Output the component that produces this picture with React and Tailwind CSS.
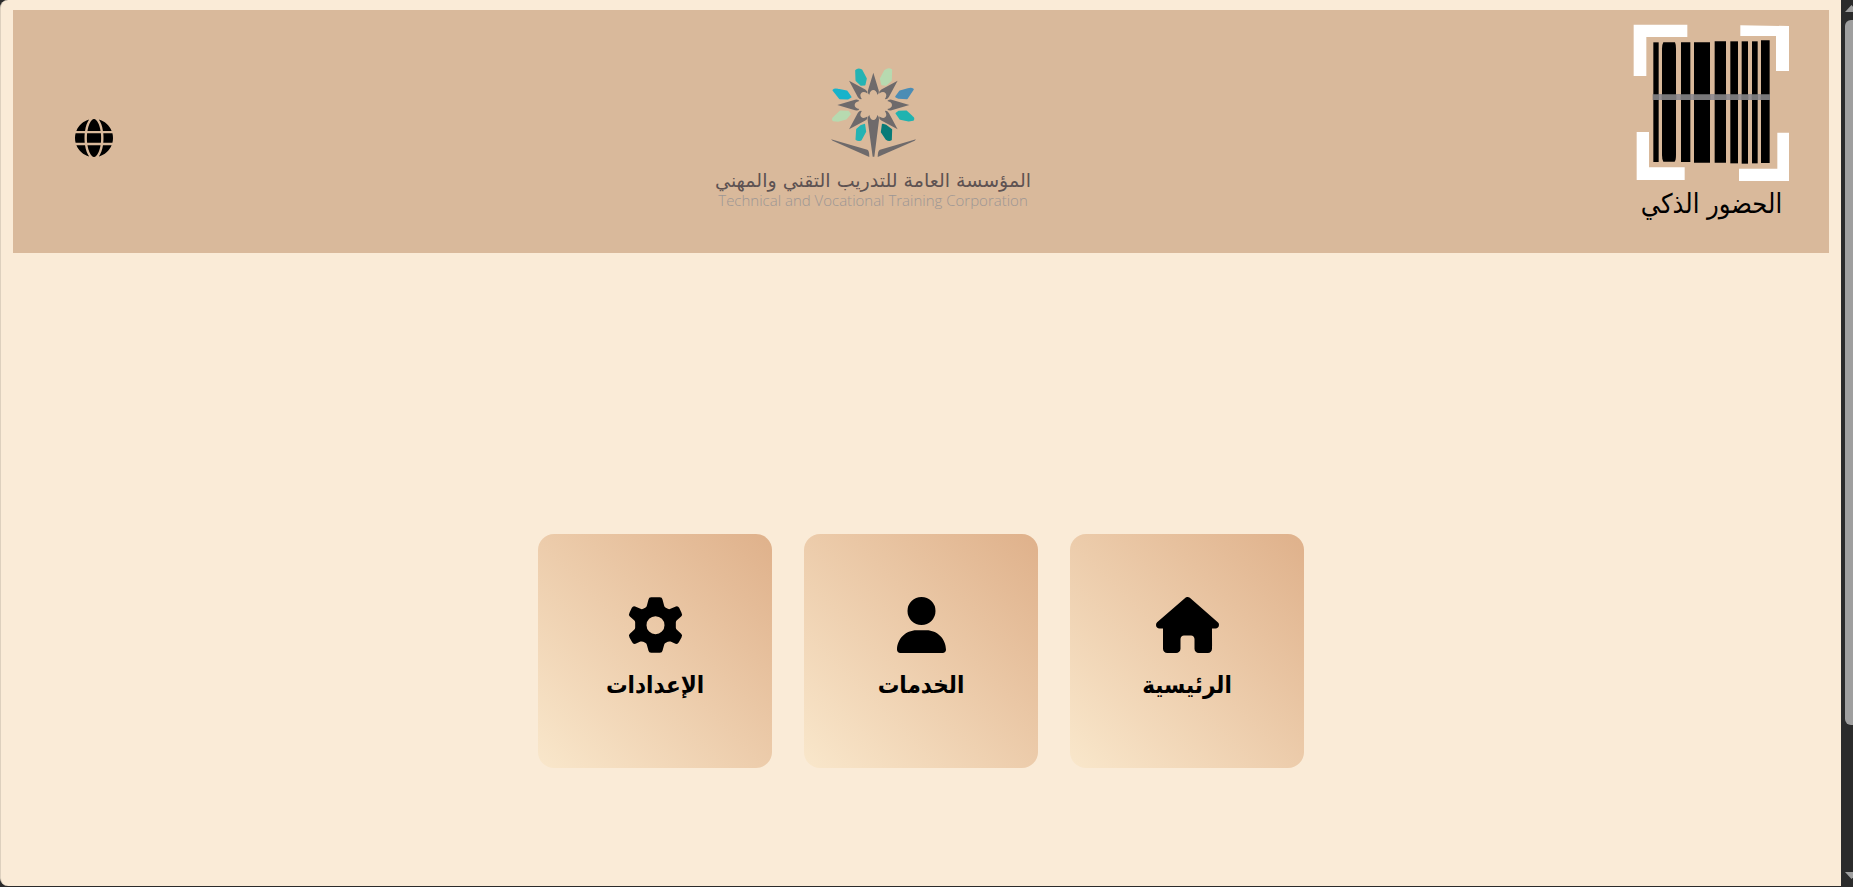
import { FaGlobe, FaHouse, FaUser } from "react-icons/fa6";

const tiles = [
  { label: "الرئيسية", href: "#home", Icon: FaHouse },
  { label: "الخدمات", href: "#services", Icon: FaUser },
  { label: "الإعدادات", href: "#settings", Icon: GearIcon },
];

function GearIcon({ className }) {
  return (
    <svg viewBox="16.5 20.5 189 168" className={className} fill="currentColor" aria-hidden="true">
      <path
        fillRule="evenodd"
        d="M98 21H124Q131 21 132 28L137 47Q138 51 142 53L148 56Q152 58 156 56L172 49Q178 46 182 53L189 68Q193 75 188 79L175 90Q172 93 172 97V112Q172 116 175 119L188 131Q193 135 189 142L181 156Q178 163 171 161L156 154Q152 153 148 155L142 158Q138 160 137 164L132 182Q131 188 124 188H98Q91 188 90 182L85 164Q84 160 80 158L74 155Q70 153 66 154L51 161Q44 163 41 156L33 142Q29 135 34 131L47 119Q50 116 50 112V97Q50 93 47 90L34 79Q29 75 33 68L40 53Q44 46 50 49L66 56Q70 58 74 56L80 53Q84 51 85 47L90 28Q91 21 98 21ZM111 78A27 27 0 1 0 111 132A27 27 0 1 0 111 78Z"
      />
    </svg>
  );
}

function BarcodeMark() {
  return (
    <svg viewBox="99 72 471 474" className="h-[158px] w-[157px]" aria-hidden="true">
      <g fill="#fff">
        <path d="M101 74H262V111H139V228H101Z" />
        <path d="M421 76L567 78V213H528V108H421Z" />
        <path d="M110 396H147V502H254V540H110Z" />
        <path d="M532 398H567V543H417V506H532Z" />
      </g>
      <path d="M160 127H176V486H160Z" />
      <path d="M190 127H225Q228 134 228 146V465Q228 480 224 485H190Q186 478 186 465V146Q186 134 190 127Z" />
      <path d="M243 127H271V486H243Z" />
      <path d="M282 127H330V488H282Z" />
      <path d="M344 124H378V488H344Z" />
      <path d="M391 124H414V490H391Z" />
      <path d="M425 124H444V491H425Z" />
      <path d="M456 124H473V490H456Z" />
      <path d="M483 121H509V489H483Z" />
      <path d="M158 283H510V300H158Z" fill="#79787a" />
      <path
        d="M177 283h8v17h-8zM229 283h13v17h-13zM272 283h9v17h-9zM331 283h12v17h-12zM379 283h11v17h-11zM415 283h9v17h-9zM445 283h10v17h-10zM474 283h8v17h-8z"
        fill="#969093"
      />
    </svg>
  );
}

function Emblem() {
  const ray = "M520 68L536 121Q538 131 532 134Q529 120 520 120Q511 120 508 134Q502 131 504 121Z";
  return (
    <svg viewBox="390 51 261 273" className="h-[91px] w-[87px]" aria-hidden="true">
      <g strokeWidth="5" strokeLinejoin="round">
        <path d="M468 62Q474 55 485 61L498 86L494 104L483 105L469 91Z" fill="#25b3b3" stroke="#25b3b3" />
        <path d="M574 60Q566 54 555 62L542 86L546 103L557 105L573 91Z" fill="#b7dab0" stroke="#b7dab0" />
        <path d="M400 121Q404 116 414 119L440 124L452 141L443 146L419 145Z" fill="#17b3cb" stroke="#17b3cb" />
        <path d="M639 118Q634 114 624 117L600 124L588 140L596 144L621 145Z" fill="#4c8db5" stroke="#4c8db5" />
        <path d="M400 211Q396 207 402 202L421 184L445 185L450 192L438 206L414 213Z" fill="#b7dab0" stroke="#b7dab0" />
        <path d="M639 210Q643 204 636 200L619 184L596 185L589 190L601 207L626 212Z" fill="#20b3b0" stroke="#20b3b0" />
        <path d="M469 268Q475 273 483 269L496 245L493 224L484 227L471 238Z" fill="#25b3b3" stroke="#25b3b3" />
        <path d="M573 269Q567 273 559 267L545 246L548 224L558 227L574 239Z" fill="#087b78" stroke="#087b78" />
      </g>
      <g fill="#6e6a6b">
        {[0, 45, 90, 135, 225, 270, 315].map((angle) => (
          <path key={angle} d={ray} transform={`rotate(${angle} 520 165) translate(0 ${angle % 90 ? -6 : angle ? -11 : 0})`} />
        ))}
        <path d="M508 195Q511 210 520 210Q529 210 532 195Q538 199 537 210L523 320H518L503 210Q502 199 508 195Z" />
        <path d="M393 268L502 299Q508 302 508 321L398 272Z" />
        <path d="M648 268L540 299Q533 302 533 321L644 272Z" />
      </g>
    </svg>
  );
}

function Scrollbar() {
  return (
    <div className="flex w-3 shrink-0 flex-col bg-[#2b2b2b] pb-2 pl-1" aria-hidden="true">
      <svg viewBox="0 0 8 20" className="h-5 w-2">
        <path d="M0 12L6.5 5L8 6.5V12Z" fill="#9f9f9f" />
      </svg>
      <div className="h-[705px] rounded-l-md bg-[#9f9f9f]" />
      <svg viewBox="0 0 8 8" className="mt-auto h-2 w-2">
        <path d="M0 1H8V6.500L6.500 8Z" fill="#9f9f9f" />
      </svg>
    </div>
  );
}

export default function App() {
  return (
    <div className="flex min-h-screen bg-[#2b2b2b] font-['Liberation_Sans','DejaVu_Sans_Condensed','DejaVu_Sans',sans-serif] text-black">
      <div
        dir="rtl"
        lang="ar"
        className="mb-px flex flex-1 flex-col rounded-l-lg border-l border-[#ddd0be] bg-[#faebd7] px-3 pt-[10px]"
      >
        <header className="flex h-[243px] items-center justify-between bg-[#d9b99b] pr-[39px] pl-[62px]">
          <div className="flex flex-col items-center self-start pt-[14px]">
            <BarcodeMark />
            <p className="text-[27px] leading-[44px]">الحضور الذكي</p>
          </div>

          <div className="flex flex-col items-center self-start pt-[57px]">
            <Emblem />
            <p className="mt-[10px] font-['DejaVu_Sans',sans-serif] text-[19px] leading-6 whitespace-nowrap text-[#5d5252]">
              المؤسسة العامة للتدريب التقني والمهني
            </p>
            <p
              dir="ltr"
              lang="en"
              className="font-['Open_Sans',sans-serif] text-[15px] leading-4 font-light whitespace-nowrap text-[#9c9694]"
            >
              Technical and Vocational Training Corporation
            </p>
          </div>

          <button type="button" aria-label="تغيير اللغة" className="mt-3">
            <FaGlobe className="size-[38px]" />
          </button>
        </header>

        <main className="flex-1 pt-[281px]">
          <nav className="flex justify-center gap-8">
            {tiles.map(({ label, href, Icon }) => (
              <a
                key={label}
                href={href}
                className="flex size-[234px] flex-col items-center rounded-2xl bg-linear-45 from-[#f9e7cb] to-[#dfb18b] pt-[63px]"
              >
                <Icon className="h-14 w-[63px]" />
                <span className="mt-3 text-[24px] leading-10 font-bold">{label}</span>
              </a>
            ))}
          </nav>
        </main>
      </div>
      <Scrollbar />
    </div>
  );
}
